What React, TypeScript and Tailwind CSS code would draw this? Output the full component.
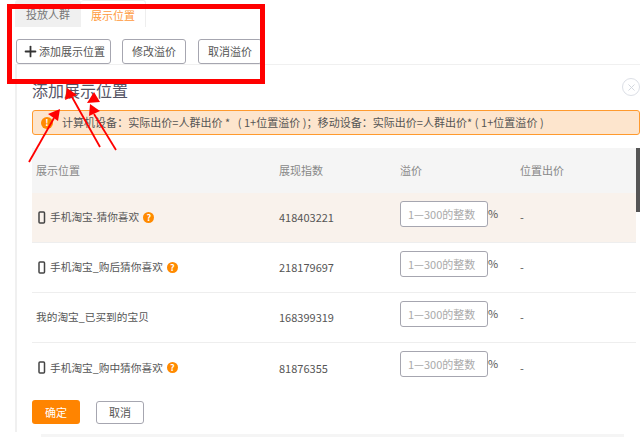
import React from 'react';
import { Plus, X } from 'lucide-react';

type Row = { name: string; phone: boolean; hint: boolean; index: string; active?: boolean };

const rows: Row[] = [
  { name: '手机淘宝-猜你喜欢', phone: true, hint: true, index: '418403221', active: true },
  { name: '手机淘宝_购后猜你喜欢', phone: true, hint: true, index: '218179697' },
  { name: '我的淘宝_已买到的宝贝', phone: false, hint: false, index: '168399319' },
  { name: '手机淘宝_购中猜你喜欢', phone: true, hint: true, index: '81876355' },
];

function PhoneIcon() {
  return (
    <svg width="8" height="13" viewBox="0 0 8 13" className="mr-[4px] shrink-0">
      <rect x="1" y="1" width="5.5" height="11" rx="1" fill="none" stroke="#444" strokeWidth="1.5" />
    </svg>
  );
}

function HintBadge() {
  return (
    <span className="ml-[4px] flex h-[11px] w-[11px] items-center justify-center rounded-full bg-[#ff8a00] text-[9px] font-bold leading-none text-white">
      ?
    </span>
  );
}

function OutlineButton({ children, className }: { children: React.ReactNode; className: string }) {
  return (
    <button className={`flex h-[25px] items-center justify-center rounded-[3px] border border-[#a6a6b0] bg-white text-[11px] text-[#555] ${className}`}>
      {children}
    </button>
  );
}

// red annotation drawn on top of the screenshot
function Annotation() {
  return (
    <>
      <div className="pointer-events-none absolute left-[7px] top-[4px] h-[80px] w-[258px] border-[5px] border-[#ff0000]" />
      <svg className="pointer-events-none absolute inset-0" width="640" height="437" viewBox="0 0 640 437">
        <g stroke="#ff0000" strokeWidth="1.8" fill="none">
          <path d="M29 162L54 118" />
          <path d="M100 147L72 97" />
          <path d="M116 150L94 114" />
        </g>
        <g fill="#ff0000">
          <path d="M60 109L48 114L58 121Z" />
          <path d="M67 88L65 100L77 95Z" />
          <path d="M90 104L89 116L100 111Z" />
          <path d="M94 92L87 103L100 102Z" />
        </g>
      </svg>
    </>
  );
}

export default function App() {
  return (
    <div
      className="relative h-[437px] w-[640px] overflow-hidden bg-white text-[11px] text-[#555]"
      style={{ fontFamily: '"Noto Sans CJK SC", "Noto Sans", sans-serif' }}
    >
      <div className="flex h-[27px] pl-[15px]">
        <div className="flex w-[66px] items-center justify-center rounded-t-[3px] bg-[#f0f0f0] pt-[2px] text-[#777]">投放人群</div>
        <div className="flex w-[65px] items-center justify-center rounded-t-[3px] border-r border-t border-[#eeeeee] pt-[2px] text-[#ff9a3c]">展示位置</div>
      </div>

      <div className="mt-[12px] flex pl-[16px]">
        <OutlineButton className="w-[95px]">
          <Plus size={17} strokeWidth={2.5} color="#333" />
          添加展示位置
        </OutlineButton>
        <OutlineButton className="ml-[11px] w-[64px]">修改溢价</OutlineButton>
        <OutlineButton className="ml-[12px] w-[64px]">取消溢价</OutlineButton>
      </div>

      <div className="relative ml-[15px] h-[368px] border-l-2 border-t border-[#f0f0f0] pl-[15px]">
        <h2 className="flex h-[45px] items-center pt-[5px] text-[16px] font-normal text-[#556]">添加展示位置</h2>
        <button className="absolute right-[0px] top-[13px] flex h-[18px] w-[18px] items-center justify-center rounded-full border-[1.5px] border-[#dcdfe6]">
          <X size={11} strokeWidth={2} color="#d0d4dc" />
        </button>

        <div className="flex h-[25px] items-center whitespace-pre rounded-[3px] border border-[#ff9a2e] bg-[#fde5cd] pl-[8px] tracking-[0.03px] text-[#555]">
          <span className="mr-[9px] flex h-[12px] w-[12px] items-center justify-center rounded-full bg-[#ff8a00] text-[9px] font-bold leading-none text-white">!</span>
          计算机设备：实际出价=人群出价 *   ( 1+位置溢价 )；移动设备：实际出价=人群出价* ( 1+位置溢价 )
        </div>

        <div className="mt-[13px] w-[604px]">
          <div className="grid h-[45px] grid-cols-[243px_121px_120px_1fr] items-center bg-[#f5f5f5] pl-[4px] text-[#888]">
            <div>展示位置</div>
            <div>展现指数</div>
            <div>溢价</div>
            <div>位置出价</div>
          </div>
          {rows.map((row, i) => (
            <div
              key={row.name}
              className={`grid h-[50px] grid-cols-[243px_121px_120px_1fr] items-center pl-[4px] ${row.active ? 'bg-[#f9f2ec]' : 'bg-white'} ${i < rows.length - 1 ? 'border-b border-[#eeeeee]' : ''}`}
            >
              <div className={`flex items-center ${row.phone ? 'pl-[2px]' : ''}`}>
                {row.phone && <PhoneIcon />}
                <span className="text-[10.7px]">{row.name}</span>
                {row.hint && <HintBadge />}
              </div>
              <div>{row.index}</div>
              <div className="mb-[8px] flex items-start">
                <input
                  className="h-[26px] w-[88px] rounded-[3px] border border-[#a6a6b0] bg-white pl-[7px] text-[11px] outline-none placeholder:text-[#aaa]"
                  placeholder="1—300的整数"
                  readOnly
                />
                <span className="leading-[24px]">%</span>
              </div>
              <div>-</div>
            </div>
          ))}
        </div>

        <div className="mt-[7px] flex items-end">
          <button className="h-[24px] w-[48px] rounded-[3px] bg-[#ff8400] text-[11px] text-white">确定</button>
          <button className="ml-[16px] h-[23px] w-[48px] rounded-[3px] border border-[#a6a6b0] bg-white text-[11px] text-[#555]">取消</button>
        </div>
      </div>

      <div className="ml-[41px] mt-[2px] h-[3px] w-[583px] bg-[#f5f5f5]" />

      <div className="absolute right-0 top-[148px] h-[64px] w-[4px] bg-[#555]" />
      <Annotation />
    </div>
  );
}
